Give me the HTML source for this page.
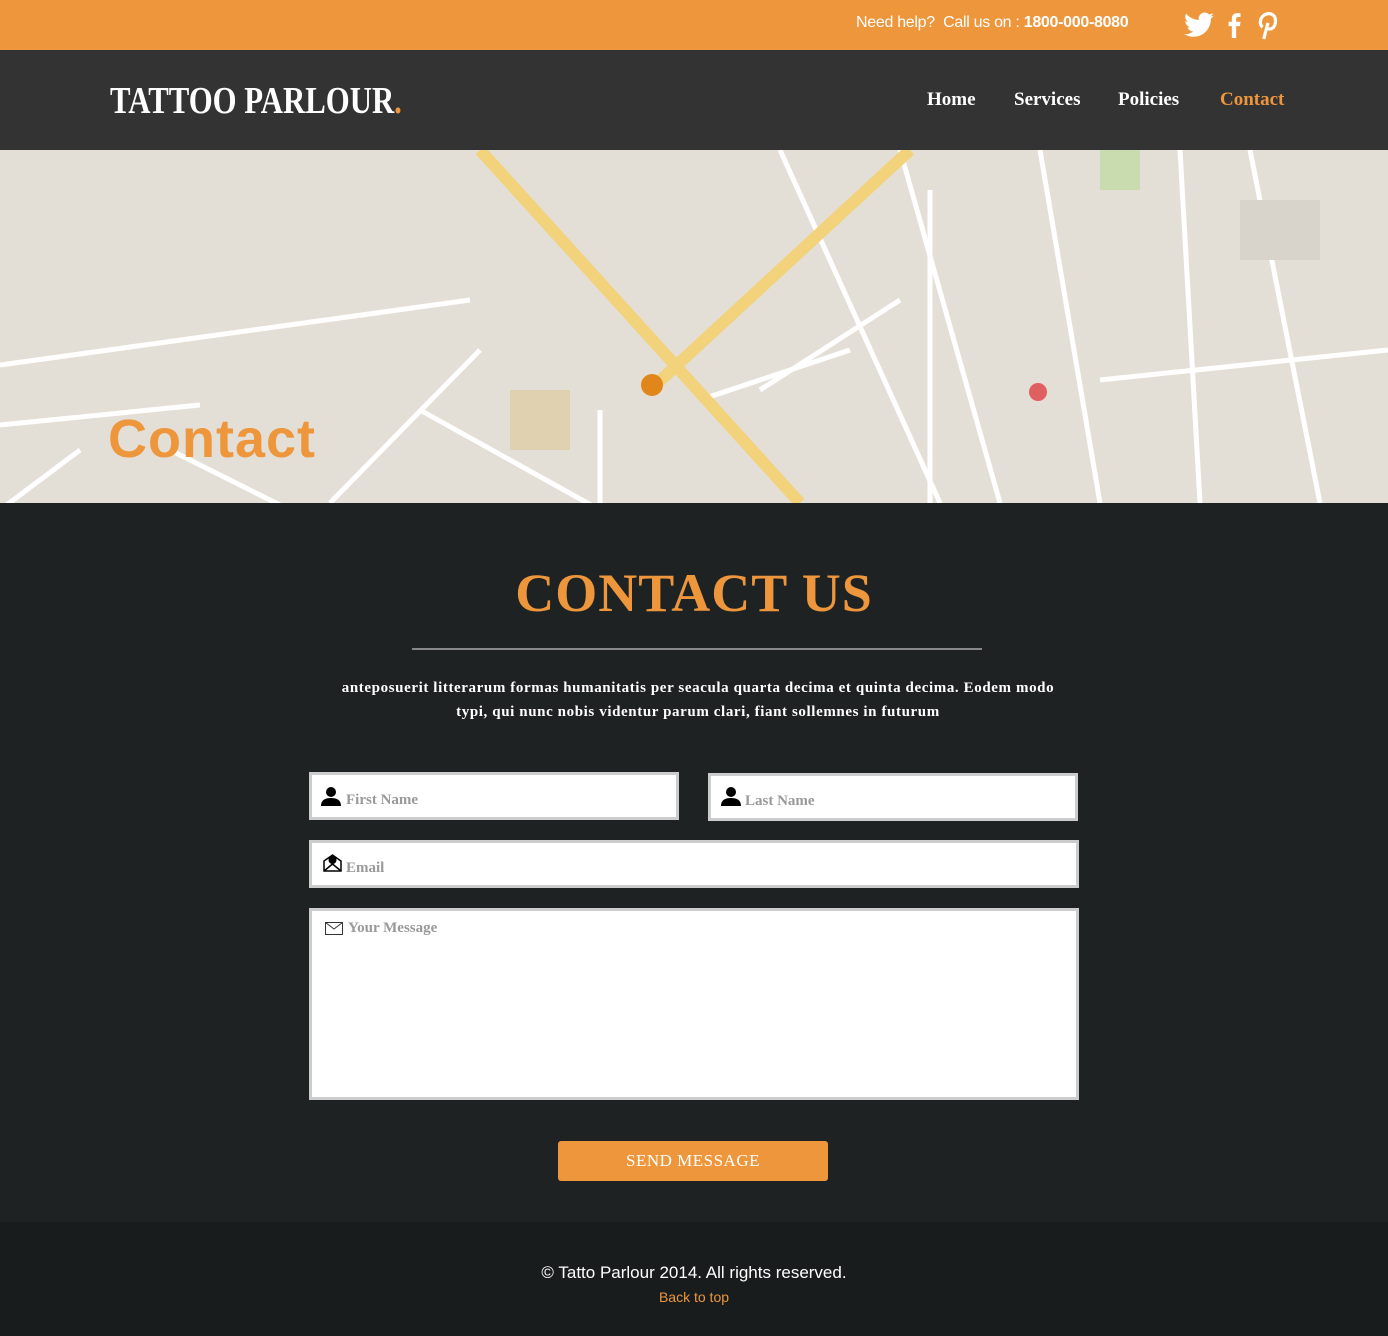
<!DOCTYPE html>
<html><head><meta charset="utf-8"><style>
*{margin:0;padding:0;box-sizing:border-box}
body{width:1388px;height:1336px;background:#1e2223;font-family:"Liberation Serif",serif;overflow:hidden}
.top{height:50px;background:#ed963c;position:relative;color:#fff}
.top .help{position:absolute;left:856px;top:14px;font-family:"Liberation Sans",sans-serif;font-size:16px;letter-spacing:-0.3px}
.hdr{height:100px;background:#333;position:relative}
.logo{position:absolute;left:110px;top:31px;color:#fff;font-size:38px;font-weight:bold;transform:scaleX(0.81);transform-origin:left top;line-height:40px}
.logo span{color:#ed963c}
.nav{position:absolute;top:39px;font-size:19px;font-weight:bold;color:#fff;line-height:22px}
.map{height:353px;background:#e4dfd6;position:relative;overflow:hidden}
h1{position:absolute;top:562px;width:100%;text-align:center;color:#ed963c;font-size:54px;letter-spacing:1px;font-weight:bold}
.inp{position:absolute;background:#fff;border:3px solid #ccc;color:#999;font-size:15px;font-weight:bold;padding-left:34px}
.btn{position:absolute;left:558px;top:1141px;width:270px;height:40px;background:#ed963c;border-radius:3px;color:#fff;font-size:17px;text-align:center;line-height:40px;letter-spacing:0.5px}
.foot{position:absolute;top:1222px;left:0;width:1388px;height:114px;background:#181c1d;text-align:center;font-family:"Liberation Sans",sans-serif}
</style></head><body>
<div class="top"><div class="help">Need help?&nbsp; Call us on : <b>1800-000-8080</b></div>
<svg style="position:absolute;left:1184px;top:12px" width="30" height="26" viewBox="0 0 24 20"><path fill="#fff" d="M24 2.4a10 10 0 0 1-2.8.8A5 5 0 0 0 23.3.4a10 10 0 0 1-3.1 1.2A4.9 4.9 0 0 0 11.8 6 14 14 0 0 1 1.7.9a4.9 4.9 0 0 0 1.5 6.6 4.9 4.9 0 0 1-2.200-.6 4.9 4.9 0 0 0 3.9 4.8 4.9 4.9 0 0 1-2.2.1 4.9 4.9 0 0 0 4.6 3.4A9.9 9.9 0 0 1 0 17.2 14 14 0 0 0 7.5 19.4c9.1 0 14-7.5 14-14v-.6A10 10 0 0 0 24 2.4z"/></svg>
<svg style="position:absolute;left:1227px;top:12px" width="14" height="26" viewBox="0 0 12 24"><path fill="#fff" d="M8 24V13h3.5l.5-4H8V6.5C8 5.4 8.3 4.6 9.9 4.6H12V1.1A28 28 0 0 0 9 1C6 1 4 2.8 4 6.1V9H1v4h3v11z"/></svg>
<svg style="position:absolute;left:1257px;top:10px" width="22" height="30" viewBox="0 0 20 28"><path fill="none" stroke="#fff" stroke-width="3" d="M6 27l4-15M5 16C2 14 2 8 6 5s11-2 11 5-5 9-7 7"/></svg>
</div>
<div class="hdr"><div class="logo">TATTOO PARLOUR<span>.</span></div>
<div class="nav" style="left:927px">Home</div>
<div class="nav" style="left:1014px">Services</div>
<div class="nav" style="left:1118px">Policies</div>
<div class="nav" style="left:1220px;color:#ed963c">Contact</div>
</div>
<div class="map">
<svg width="1388" height="353" style="position:absolute;left:0;top:0">
<g stroke="#fff" stroke-width="5" fill="none">
<path d="M0 215L470 150M0 275L200 255M170 300L330 380M330 353L480 200M420 260L600 360M600 260L600 353M780 0L940 353M900 0L1000 353M1040 0L1100 353M1180 0L1200 353M1250 0L1320 353M0 360L80 300M700 250L850 200M760 240L900 150M930 40L930 353M1100 230L1388 200"/>
</g>
<g stroke="#f2d27a" stroke-width="12" fill="none">
<path d="M480 0L800 353"/><path d="M650 240L910 0"/>
</g>
<rect x="1240" y="50" width="80" height="60" fill="#d8d4cb"/>
<rect x="510" y="240" width="60" height="60" fill="#e0d2b0"/>
<rect x="1100" y="0" width="40" height="40" fill="#c8dcb0"/>
<circle cx="652" cy="235" r="11" fill="#e0861a"/><circle cx="1038" cy="242" r="9" fill="#e06060"/>
</svg>
<div style="position:absolute;left:108px;top:258px;color:#ed963c;font-family:'Liberation Sans',sans-serif;font-weight:900;font-size:54px;letter-spacing:1px">Contact</div>
</div>
<h1>CONTACT US</h1>
<div style="position:absolute;left:412px;top:648px;width:570px;height:2px;background:#888"></div>
<div style="position:absolute;left:324px;top:676px;width:748px;text-align:center;color:#fff;font-size:15px;font-weight:bold;line-height:24px;letter-spacing:0.6px">anteposuerit litterarum formas humanitatis per seacula quarta decima et quinta decima. Eodem modo typi, qui nunc nobis videntur parum clari, fiant sollemnes in futurum</div>
<div class="inp" style="left:309px;top:772px;width:370px;height:48px;line-height:50px">First Name</div>
<div class="inp" style="left:708px;top:773px;width:370px;height:48px;line-height:50px">Last Name</div>
<div class="inp" style="left:309px;top:840px;width:770px;height:48px;line-height:50px">Email</div>
<div class="inp" style="left:309px;top:908px;width:770px;height:192px;padding-top:9px;padding-left:36px">Your Message</div>
<svg style="position:absolute;left:321px;top:786px" width="20" height="20" viewBox="0 0 20 20"><circle cx="10" cy="6" r="5"/><path d="M0 20c0-6 4-8 10-8s10 2 10 8z"/></svg>
<svg style="position:absolute;left:721px;top:786px" width="20" height="20" viewBox="0 0 20 20"><circle cx="10" cy="6" r="5"/><path d="M0 20c0-6 4-8 10-8s10 2 10 8z"/></svg>
<svg style="position:absolute;left:323px;top:854px" width="19" height="18" viewBox="0 0 19 18"><path d="M1 7L9.5 1 18 7v10H1z" fill="none" stroke="#000" stroke-width="1.5"/><circle cx="9.5" cy="6" r="4"/><path d="M1 17l8.5-7 8.5 7" fill="none" stroke="#000" stroke-width="1.5"/></svg>
<svg style="position:absolute;left:325px;top:922px" width="18" height="13" viewBox="0 0 18 13"><rect x=".5" y=".5" width="17" height="12" fill="none" stroke="#333"/><path d="M.5 .5L9 7l8.5-6.5" fill="none" stroke="#333"/></svg>
<div class="btn">SEND MESSAGE</div>
<div class="foot"><div style="color:#fff;font-size:17px;margin-top:41px">© Tatto Parlour 2014. All rights reserved.</div><div style="color:#ed963c;font-size:14px;margin-top:6px">Back to top</div></div>
</body></html>
